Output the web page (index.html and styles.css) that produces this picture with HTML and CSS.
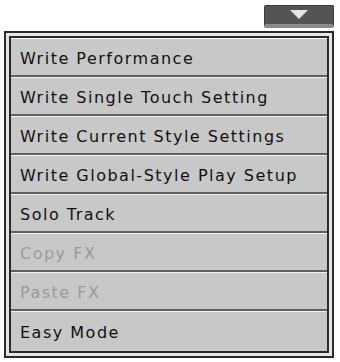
FILE: index.html
```html
<!DOCTYPE html>
<html>
<head>
<meta charset="utf-8">
<link rel="stylesheet" href="styles.css">
</head>
<body>
<div class="page">
  <div class="top">
    <div class="btn">
      <svg class="tri" width="18" height="9" viewBox="0 0 18 9"><polygon points="0,0 18,0 9,9" fill="#e4e4e4"/></svg>
    </div>
  </div>
  <div class="menu">
    <div class="inner">
      <div class="item">Write Performance</div>
      <div class="item">Write Single Touch Setting</div>
      <div class="item">Write Current Style Settings</div>
      <div class="item">Write Global-Style Play Setup</div>
      <div class="item">Solo Track</div>
      <div class="item disabled">Copy FX</div>
      <div class="item disabled">Paste FX</div>
      <div class="item last">Easy Mode</div>
    </div>
  </div>
</div>
</body>
</html>
```
FILE: styles.css
```css
html, body {
  margin: 0;
  padding: 0;
  background: #ffffff;
}
.page {
  width: 340px;
  height: 362px;
  overflow: hidden;
}
.top {
  height: 31px;
  display: flex;
  justify-content: flex-end;
  align-items: flex-start;
  padding-right: 6px;
  box-sizing: border-box;
  padding-top: 5px;
}
.btn {
  width: 70px;
  height: 23px;
  box-sizing: border-box;
  background: #545454;
  border: 1px solid #3a3a3a;
  border-bottom: 4px solid #8a8a8a;
  border-radius: 2px;
  display: flex;
  justify-content: center;
  align-items: flex-start;
  padding-top: 4px;
}
.menu {
  margin-left: 4px;
  width: 330px;
  height: 327px;
  box-sizing: border-box;
  border: 2px solid #2a2a2a;
  background: #e6e6e6;
  padding: 3px;
}
.inner {
  height: 100%;
  box-sizing: border-box;
  border: 2px solid #2a2a2a;
  display: flex;
  flex-direction: column;
  background: #c8c8c8;
}
.item {
  height: 39px;
  box-sizing: border-box;
  border-top: 1px solid #f2f2f2;
  border-bottom: 2px solid #606060;
  background: #c8c8c8;
  display: flex;
  align-items: center;
  padding-left: 9px;
  padding-top: 2px;
  font-family: "DejaVu Sans", sans-serif;
  font-size: 16px;
  letter-spacing: 1.5px;
  color: #111111;
}
.item.last {
  border-bottom: none;
  flex: 1;
}
.item.disabled {
  color: #9a9a9a;
}
```
